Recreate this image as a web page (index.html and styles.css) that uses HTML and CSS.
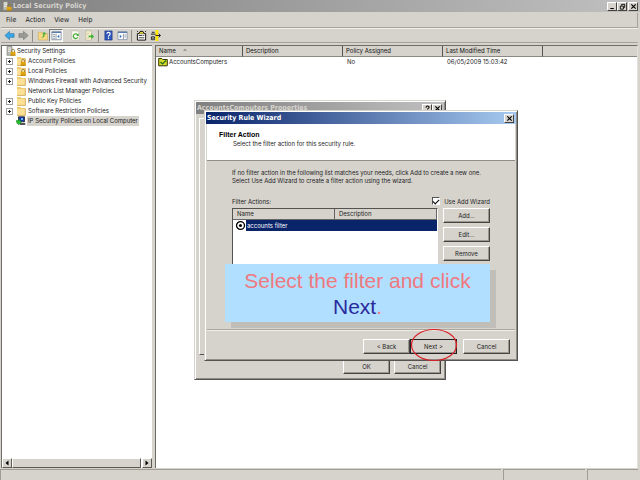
FILE: index.html
```html
<!DOCTYPE html>
<html lang="en">
<head>
<meta charset="utf-8">
<title>Local Security Policy</title>
<link rel="stylesheet" href="styles.css">
</head>
<body>
<svg class="defs" aria-hidden="true">
  <symbol id="folder" viewBox="0 0 10 10"><path d="M1 1h3.500l1 1H9.500V9.500H1z" fill="#f0cc70"/><path d="M1 9V3h8v6z" fill="#fbe096"/><path d="M1 9.400h8.300V2.500" fill="none" stroke="#c9a14a" stroke-width=".7"/></symbol>
  <symbol id="lock" viewBox="0 0 10 10"><path d="M5.7 6V4.7a1.4 1.4 0 0 1 2.8 0V6" fill="none" stroke="#8d7a3a" stroke-width=".9"/><path d="M4.7 5.8h4.8v3.8H4.7z" fill="#e0a512"/><path d="M4.7 9.3h4.8" stroke="#a87400" stroke-width=".7"/></symbol>
  <symbol id="server" viewBox="0 0 10 10"><path d="M1 .5h5v8.8H1z" fill="#b9bbb4" stroke="#77786f" stroke-width=".6"/><path d="M2 2h3M2 3.7h3M2 5.4h3" stroke="#f4f4ee" stroke-width=".8"/><use href="#lock"/></symbol>
  <symbol id="close" viewBox="0 0 8 8"><path d="M1.5 1.5l5 5m0-5l-5 5" stroke="#000" stroke-width="1.3"/></symbol>
</svg>
<div class="app">
  <header class="titlebar">
    <svg class="icon"><use href="#server"/></svg>
    <h1>Local Security Policy</h1>
    <button class="cap" aria-label="Minimize"><svg viewBox="0 0 8 8"><path d="M1.5 6.3h4" stroke="#000" stroke-width="1.2"/></svg></button>
    <button class="cap" aria-label="Restore"><svg viewBox="0 0 8 8"><path d="M3 3V1.5h3.5V5H5.3M1.5 3.5H5V7H1.5z" fill="none" stroke="#000"/></svg></button>
    <button class="cap last" aria-label="Close"><svg><use href="#close"/></svg></button>
  </header>
  <nav class="menubar">
    <button>File</button><button>Action</button><button>View</button><button>Help</button>
  </nav>
  <div class="toolbar">
    <button aria-label="Back"><svg viewBox="0 0 12 12"><path d="M1 6l5-4.5V4h5v4H6v2.5z" fill="#39a8e8" stroke="#2676ad" stroke-width=".7"/></svg></button>
    <button aria-label="Forward"><svg viewBox="0 0 12 12"><path d="M11 6L6 1.5V4H1v4h5v2.5z" fill="#9a9a96" stroke="#74746f" stroke-width=".7"/></svg></button>
    <i></i>
    <button aria-label="Up"><svg viewBox="0 0 12 12"><path d="M1.500 2.500h4l1 1.500h5V11h-10z" fill="#f6d985" stroke="#c9a452" stroke-width=".6"/><path d="M4 8c2 0 3-1.500 3-3.500H5.500L8 2l2.200 2.500H8.500C8.500 7 7 9 4 8z" fill="#4fae35"/></svg></button>
    <button class="pressed" aria-label="Show console tree" aria-pressed="true"><svg viewBox="0 0 12 12"><path d="M1 2h10v8.500H1z" fill="#fff" stroke="#76859c" stroke-width=".8"/><path d="M1 2.500h10" stroke="#5b7cae" stroke-width="1.500"/><path d="M2 5h2.500m-2.500 2h2.500m-2.500 2h2.500M5.500 4v6" stroke="#6c7c92" stroke-width=".8"/><path d="M9 5v4L6.800 7z" fill="#3578bd"/></svg></button>
    <span class="space"></span>
    <button aria-label="Refresh"><svg viewBox="0 0 12 12"><path d="M2 1h6l2 2v8H2z" fill="#fffef0" stroke="#b5b5a9" stroke-width=".6"/><path d="M8.500 5.500A2.600 2.600 0 1 0 8.500 8" fill="none" stroke="#39aa35" stroke-width="1.300"/><path d="M9.500 3.500v3H6.800z" fill="#39aa35"/></svg></button>
    <button aria-label="Export list"><svg viewBox="0 0 12 12"><path d="M2 1h6v10H2z" fill="#fff8cf" stroke="#aaa684" stroke-width=".6"/><path d="M3 3.500h3m-3 2h2m-2 3h3" stroke="#999" stroke-width=".6"/><path d="M5 6h3V4l3 3-3 3V8H5z" fill="#43b339"/></svg></button>
    <i></i>
    <button aria-label="Help"><svg viewBox="0 0 12 12"><path d="M2 1h8v10H2z" fill="#2f57b8" stroke="#1b327c" stroke-width=".6"/><path d="M4.300 4.200c0-2.200 3.500-2 3.500 0C7.800 5.700 6 5.500 6 7.300M6 8.300v1.400" fill="none" stroke="#fff" stroke-width="1.300"/></svg></button>
    <button aria-label="Show action pane"><svg viewBox="0 0 12 12"><path d="M1 2h10v8.500H1z" fill="#fff" stroke="#76859c" stroke-width=".8"/><path d="M1 2.500h10" stroke="#5b7cae" stroke-width="1.500"/><path d="M7 4v6M8 5.500h2M8 7.500h2" stroke="#6c7c92" stroke-width=".8"/><path d="M3 5v4l2.200-2z" fill="#3578bd"/></svg></button>
    <i></i>
    <button aria-label="Create policy"><svg viewBox="0 0 12 12"><path d="M1.500 4h9v7h-9z" fill="#fff" stroke="#000"/><path d="M3 4l1.500-2.500h3L9 4" fill="#ded33d" stroke="#000"/><path d="M3 6h4M3 8.500h6" stroke="#333"/><path d="M8 6h1M1 1l1 1M11 1l-1 1" stroke="#000"/></svg></button>
    <button aria-label="Manage filters"><svg viewBox="0 0 12 12"><path d="M6 0h3v12H6z" fill="#ffe800"/><path d="M1 4.500h5M6 6h5M9.500 4l2 2-2 2M1.500 7.500H5v3H1.500zM2 2.500h3" fill="none" stroke="#111"/><path d="M2 8.500h3v2H2z" fill="#777"/></svg></button>
  </div>
  <main class="panes">
    <section class="left">
      <ul class="tree">
        <li class="root"><svg class="icon"><use href="#server"/></svg><span>Security Settings</span></li>
        <li><b></b><svg class="icon"><use href="#folder"/><use href="#lock"/></svg><span>Account Policies</span></li>
        <li><b></b><svg class="icon"><use href="#folder"/><use href="#lock"/></svg><span>Local Policies</span></li>
        <li><b></b><svg class="icon"><use href="#folder"/></svg><span>Windows Firewall with Advanced Security</span></li>
        <li><b class="none"></b><svg class="icon"><use href="#folder"/></svg><span>Network List Manager Policies</span></li>
        <li><b></b><svg class="icon"><use href="#folder"/></svg><span>Public Key Policies</span></li>
        <li><b></b><svg class="icon"><use href="#folder"/></svg><span>Software Restriction Policies</span></li>
        <li><b class="none"></b><svg class="icon" viewBox="0 0 10 10"><path d="M2.500 .8h6v5h-6z" fill="#1838a8" stroke="#222" stroke-width=".8"/><path d="M3.500 7h5.800v2H4z" fill="#555"/><path d="M0 4.500h2.500V3l3 3-3 3V7.500H1z" fill="#22bd2b" stroke="#087014" stroke-width=".4"/><path d="M5 2h2v2H5z" fill="#72b8ff"/></svg><span class="current">IP Security Policies on Local Computer</span></li>
      </ul>
      <div class="scroll">
        <button aria-label="Scroll left"><svg viewBox="0 0 8 8"><path d="M5.500 1.500v5L2.500 4z"/></svg></button>
        <div class="thumb"></div>
        <button aria-label="Scroll right"><svg viewBox="0 0 8 8"><path d="M2.500 1.500v5l3-2.500z"/></svg></button>
      </div>
    </section>
    <section class="right">
      <table class="policies">
        <colgroup><col class="c1"><col class="c2"><col class="c2"><col class="c2"><col></colgroup>
        <thead><tr><th>Name<svg class="sort" viewBox="0 0 6 4"><path d="M0 4l3-3 3 3z" fill="#8a8a84"/></svg></th><th>Description</th><th>Policy Assigned</th><th>Last Modified Time</th><th></th></tr></thead>
        <tbody><tr><td><div class="name"><svg class="icon" viewBox="0 0 10 10"><path d="M.7 1.500h3l1 1h4.600v6.300H.7z" fill="#d6da2a" stroke="#353500"/><path d="M2.500 5l2 2L8 3.500" fill="none" stroke="#206b20" stroke-width="1.200"/></svg>AccountsComputers</div></td><td></td><td>No</td><td>06/05/2009 15:03:42</td><td></td></tr></tbody>
      </table>
    </section>
  </main>
  <footer class="status"><span></span><span></span><span></span></footer>
</div>

<section class="dialog props" role="dialog" aria-label="AccountsComputers Properties">
  <div class="caption idle"><h2>AccountsComputers Properties</h2>
    <button class="cap" aria-label="Help"><svg viewBox="0 0 8 8"><path d="M2.300 3c0-2.500 3.500-2.300 3.500-.3C5.800 4 4 3.800 4 5.200M4 6v1.300" fill="none" stroke="#000" stroke-width="1.200"/></svg></button>
    <button class="cap" aria-label="Close"><svg><use href="#close"/></svg></button></div>
  <div class="sheet"></div>
  <div class="actions"><button class="btn">OK</button><button class="btn">Cancel</button></div>
</section>

<section class="dialog wizard" role="dialog" aria-label="Security Rule Wizard">
  <div class="caption"><h2>Security Rule Wizard</h2><button class="cap" aria-label="Close"><svg><use href="#close"/></svg></button></div>
  <div class="banner"><h3>Filter Action</h3><p>Select the filter action for this security rule.</p></div>
  <div class="body">
    <p>If no filter action in the following list matches your needs, click Add to create a new one.<br>Select Use Add Wizard to create a filter action using the wizard.</p>
    <div class="labels"><span>Filter Actions:</span><label for="useadd"><input type="checkbox" id="useadd" checked>Use Add Wizard</label></div>
    <div class="pick">
      <div class="list">
        <table>
          <thead><tr><th>Name</th><th>Description</th></tr></thead>
          <tbody><tr><td colspan="2"><div class="item"><svg class="radio" viewBox="0 0 10 10"><circle cx="5" cy="5" r="3.600" fill="#fff" stroke="#000" stroke-width="1.200"/><circle cx="5" cy="5" r="1.400"/></svg><span>accounts filter</span></div></td></tr></tbody>
        </table>
      </div>
      <div class="side"><button class="btn">Add...</button><button class="btn">Edit...</button><button class="btn">Remove</button></div>
    </div>
  </div>
  <div class="actions"><button class="btn">&lt; Back</button><button class="btn default">Next &gt;</button><button class="btn gap">Cancel</button></div>
</section>

<aside class="callout">Select the filter and click <em>Next</em>.</aside>
<svg class="ring" viewBox="0 0 48 34"><ellipse cx="24" cy="17" rx="22.500" ry="15.500" fill="none" stroke="#dc2028" stroke-width="1.200"/></svg>
</body>
</html>
```
FILE: styles.css
```css
* { box-sizing: border-box; }
body {
  margin: 0;
  overflow: hidden;
  background: #d6d3cc;
  color: #1c1c24;
  font: 6px/10px Inter, sans-serif;
}
h1, h2, h3, p, ul { margin: 0; padding: 0; font-size: inherit; }
button { margin: 0; padding: 0; border: 0; background: none; font: inherit; color: inherit; }
svg { display: block; }
.defs { display: none; }
.icon { width: 10px; height: 10px; flex: none; }

.app { height: 100vh; display: flex; flex-direction: column; }

.titlebar {
  display: flex;
  align-items: center;
  height: 12px;
  padding: 0 2px 0 2px;
  background: linear-gradient(90deg, #808080, #c0c0c0);
  color: #d8d5ce;
}
.titlebar h1 { flex: 1; padding-left: 1px; font: bold 7px/10px "DejaVu Sans Condensed", sans-serif; }
.cap {
  width: 10px;
  height: 9px;
  display: grid;
  place-items: center;
  background: #d6d3cc;
  border: 1px solid;
  border-color: #fff #45433f #45433f #fff;
}
.cap svg { width: 7px; height: 7px; }
.cap.last { margin-left: 1px; }

.menubar {
  display: flex;
  gap: 9px;
  height: 15px;
  margin: 1px 2px 0 1px;
  padding: 2px 0 0 5px;
  border-bottom: 1px solid #a5a29b;
  border-right: 1px solid #a5a29b;
  font: 7px/10px "DejaVu Sans Condensed", sans-serif;
}
.menubar button { height: 10px; }
.toolbar {
  display: flex;
  align-items: center;
  height: 15px;
  margin: 0 2px 0 1px;
  padding-left: 1px;
  border-top: 1px solid #f1efea;
  border-bottom: 1px solid #a5a29b;
}
.toolbar button { width: 14px; height: 13px; display: grid; place-items: center; }
.toolbar svg { width: 11px; height: 11px; }
.toolbar i { width: 1px; height: 12px; margin: 0 2px; background: #8f8d86; }
.toolbar .pressed { background: #ecebe6; border: 1px solid; border-color: #777 #fff #fff #777; }
.space { width: 5px; }

.panes { flex: 1; display: flex; gap: 3px; min-height: 0; margin: 2px 2px 0 1px; }
.left, .right { background: #fff; border-top: 1px solid #6e6c67; border-left: 1px solid #6e6c67; }
.left { width: 151px; flex: none; display: flex; flex-direction: column; }
.right { flex: 1; min-width: 0; border-right: 1px solid #e3e1dc; }
.tree { flex: 1; list-style: none; padding: 0 0 0 4px; white-space: nowrap; overflow: hidden; }
.tree li { display: flex; align-items: center; height: 10px; }
.tree .icon { margin-right: 1px; }
.tree .root .icon { margin: 0; }
.tree span { padding: 0 1px; }
.tree b {
  flex: none;
  width: 7px;
  height: 7px;
  margin-right: 3px;
  border: 1px solid #a0a0a0;
  background:
    linear-gradient(#222, #222) center / 3px 1px no-repeat,
    linear-gradient(#222, #222) center / 1px 3px no-repeat, #fff;
}
.tree .none { visibility: hidden; }
.tree .current { background: #d6d3cc; }
.scroll { display: flex; height: 10px; }
.scroll button, .thumb { background: #d6d3cc; border: 1px solid; border-color: #fff #5b5954 #5b5954 #fff; }
.scroll button { width: 10px; }
.scroll svg { width: 8px; height: 8px; }
.thumb { flex: 1; margin-right: 1px; }

table { border-collapse: separate; border-spacing: 0; table-layout: fixed; width: 100%; }
th, td { padding: 0; text-align: left; font-weight: normal; white-space: nowrap; }
.policies .c1 { width: 87px; }
.policies .c2 { width: 100px; }
.policies th { height: 10px; padding-left: 3px; background: #d6d3cc; border-right: 1px solid #555; border-bottom: 1px solid #8b8982; color: #111; }
.policies th:last-child { border-right: 0; }
.policies td { height: 10px; padding-left: 4px; }
.policies td:first-child { padding-left: 2px; }
.policies .name { display: flex; align-items: center; gap: 1px; }
.sort { display: inline-block; width: 4px; height: 3px; margin-left: 7px; vertical-align: 2px; }

.status { display: flex; gap: 2px; height: 12px; padding: 1px 2px 0 0; }
.status span { flex: 0 0 82px; border-top: 1px solid #a09d97; border-left: 1px solid #a09d97; }
.status span:first-child { flex: 1; }
.status span:last-child { flex-basis: 51px; }

.dialog {
  position: absolute;
  display: flex;
  flex-direction: column;
  background: #d6d3cc;
  border: 1px solid;
  border-color: #d6d3cc #55534f #55534f #d6d3cc;
  box-shadow: inset 1px 1px #fff, inset -1px -1px #8f8d87;
  line-height: 8px;
}
.props { left: 194px; top: 100px; width: 252px; height: 280px; }
.wizard { left: 204px; top: 110px; width: 314px; height: 251px; }
.caption {
  display: flex;
  align-items: center;
  height: 12px;
  margin: 1px 1px 0;
  padding: 0 2px 0 1px;
  background: linear-gradient(90deg, #0a246a, #a6caf0);
  color: #fff;
  font: 7px/8px "DejaVu Sans Condensed", sans-serif;
}
.caption h2 { flex: 1; }
.idle { background: linear-gradient(90deg, #808080, #c0c0c0); color: #d8d5ce; }
.sheet { flex: 1; margin: 4px 4px 0; border: 1px solid; border-color: #fff #55534f #55534f #fff; }
.btn {
  width: 47px;
  height: 15px;
  background: #d6d3cc;
  border: 1px solid;
  border-color: #fff #45433f #45433f #fff;
  box-shadow: inset -1px -1px #9a9790;
}
.actions { display: flex; justify-content: flex-end; }
.props .actions { gap: 4px; padding: 4px 4px 5px; }
.banner { height: 37px; margin: 0 2px; padding: 6px 12px; background: #fff; border-bottom: 1px solid #8f8d87; }
.banner h3 { font: bold 7px/10px "Liberation Sans", Arial, sans-serif; color: #000; }
.banner p { padding-left: 14px; line-height: 8px; }
.body { flex: 1; padding: 8px 27px 0 27px; }
.body p { white-space: nowrap; }
.labels { display: flex; justify-content: space-between; margin-top: 11px; line-height: 9px; }
.labels span { padding-top: 1px; }
.labels label { display: flex; align-items: center; gap: 4px; }
.labels input {
  appearance: none;
  width: 8px;
  height: 8px;
  margin: 0;
  border: 1px solid;
  border-color: #555 #fff #fff #555;
  background: #fff;
  display: grid;
  place-items: center;
}
.labels input::after { content: ""; width: 5px; height: 3px; border: solid #000; border-width: 0 0 1px 1px; transform: rotate(-45deg); }
.pick { display: flex; gap: 5px; margin-top: 2px; }
.list { flex: 1; height: 85px; background: #fff; border: 1px solid; border-color: #55534f #fff #fff #55534f; }
.list th { height: 11px; padding-left: 4px; background: #d6d3cc; border-right: 1px solid #666; border-bottom: 1px solid #666; }
.item { display: flex; height: 11px; padding-left: 2px; }
.radio { width: 11px; height: 11px; }
.item span { flex: 1; padding: 2px 1px 0; background: #0a246a; color: #fff; }
.side { display: flex; flex-direction: column; gap: 4px; }
.wizard .actions { margin: 0 2px; padding: 9px 5px 6px 0; border-top: 1px solid #aaa79f; box-shadow: inset 0 1px #eeece7; }
.default { border-color: #222; }
.gap { margin-left: 6px; }

.callout {
  position: absolute;
  left: 225px;
  top: 264px;
  width: 265px;
  padding: 4px 16px 2px;
  background: #b0dfff;
  box-shadow: 6px 6px #c1beba;
  color: #f0787f;
  font: 21px/26px "Liberation Sans", Arial, sans-serif;
  text-align: center;
}
.callout em { font-style: normal; color: #2a2a9c; }
.ring { position: absolute; left: 410px; top: 328px; width: 48px; height: 34px; }
```
